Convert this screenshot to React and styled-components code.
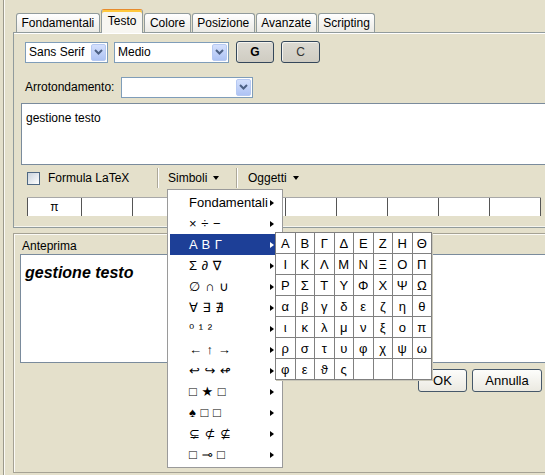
import React from "react";
import styled, { createGlobalStyle } from "styled-components";

const GlobalStyle = createGlobalStyle`
  html, body { margin: 0; padding: 0; }
  body { background: #e4e0cb; }
`;

const Root = styled.div`
  position: relative;
  box-sizing: border-box;
  width: 545px;
  height: 475px;
  overflow: hidden;
  padding-left: 3px;
  background: #e4e0cb;
  font-family: "Liberation Sans", "DejaVu Sans", Arial, sans-serif;
  font-size: 12px;
  color: #000;
`;

const Frame = styled.div`
  height: 100%;
  border-left: 1px solid #9c9a8c;
  box-shadow: inset 1px 0 0 #fbfaf5;
  padding-left: 9px;
`;

const Content = styled.div`
  width: 560px;
`;

const TabStrip = styled.div`
  display: flex;
  align-items: flex-end;
  gap: 1px;
  height: 32px;
  padding-left: 3px;
`;

const Tab = styled.div`
  position: relative;
  z-index: ${(p) => (p.$active ? 2 : 1)};
  box-sizing: border-box;
  display: flex;
  align-items: center;
  height: ${(p) => (p.$active ? 24 : 19)}px;
  margin-bottom: ${(p) => (p.$active ? -1 : 0)}px;
  padding: 0 ${(p) => (p.$active ? 6 : 4.5)}px;
  padding-bottom: ${(p) => (p.$active ? 1 : 0)}px;
  border: 1px solid #919b9c;
  border-top: 1px solid ${(p) => (p.$active ? "#e68b2c" : "#919b9c")};
  border-bottom: none;
  border-radius: 3px 3px 0 0;
  box-shadow: ${(p) => (p.$active ? "inset 0 2px 0 #ffc83c" : "none")};
  background: ${(p) => (p.$active ? "#f7f6f1" : "linear-gradient(#ffffff, #ebeae4)")};
  font-size: 12px;
`;

const TabPanel = styled.div`
  box-sizing: border-box;
  display: flex;
  flex-direction: column;
  height: 196px;
  padding: 8px 0 0 7px;
  border: 1px solid #919b9c;
  box-shadow: inset 0 1px 0 #fff, inset 0 -1px 0 #f6f5ee;
`;

const Row = styled.div`
  display: flex;
  align-items: center;
  gap: ${(p) => p.$gap || 6}px;
  height: 22px;
  margin-top: ${(p) => p.$top || 0}px;
  padding-left: 4px;
`;

const Combo = styled.div`
  box-sizing: border-box;
  display: flex;
  align-items: center;
  justify-content: space-between;
  width: ${(p) => p.$w}px;
  height: 21px;
  padding: 0 1px 0 3px;
  border: 1px solid #7f9db9;
  background: #fff;
  font-size: 12px;
`;

const ComboArrow = styled.span`
  box-sizing: border-box;
  display: flex;
  align-items: center;
  justify-content: center;
  width: 15px;
  height: 17px;
  border: 1px solid #b6c9f2;
  border-radius: 2px;
  background: linear-gradient(#d4e0fd, #aec3f4);
`;

const ToggleButton = styled.div`
  box-sizing: border-box;
  display: flex;
  align-items: center;
  justify-content: center;
  width: ${(p) => p.$w}px;
  height: 22px;
  margin-left: 1px;
  border: 1px solid #34475a;
  border-radius: 3px;
  background: linear-gradient(#dcdad2, #cfccc2);
  box-shadow: inset 1px 1px 0 #f4f3ee;
  font-size: 12px;
  font-weight: ${(p) => (p.$bold ? 700 : 400)};
  color: ${(p) => (p.$bold ? "#000" : "#333")};
`;

const TextArea = styled.div`
  box-sizing: border-box;
  height: 62px;
  margin-top: 5px;
  padding: 7px 4px;
  border: 1px solid #7a8b9c;
  background: #fff;
  line-height: 14px;
`;

const CheckRow = styled.div`
  display: flex;
  align-items: center;
  height: 20px;
  margin-top: 3px;
`;

const CheckGroup = styled.label`
  box-sizing: border-box;
  display: flex;
  align-items: center;
  gap: 8px;
  width: 136px;
  padding-left: 6px;
`;

const CheckBox = styled.span`
  box-sizing: border-box;
  width: 13px;
  height: 13px;
  border: 1px solid #4f6882;
  background: linear-gradient(135deg, #c9d2dc, #ffffff);
`;

const Separator = styled.span`
  width: 0;
  height: 20px;
  border-left: 1px solid #aca899;
  border-right: 1px solid #fff;
`;

const DropButton = styled.div`
  box-sizing: border-box;
  display: flex;
  align-items: center;
  gap: 6px;
  width: ${(p) => p.$w}px;
  padding-left: ${(p) => p.$pad}px;
`;

const DownTriangle = styled.span`
  width: 0;
  height: 0;
  border-left: 3.5px solid transparent;
  border-right: 3.5px solid transparent;
  border-top: 4px solid #000;
`;

const SymbolBar = styled.div`
  display: flex;
  width: 514px;
  height: 19px;
  margin: 9px 0 0 6px;
  border-top: 1px solid #a8a8a8;
  background: #fff;
  box-sizing: border-box;
`;

const SymbolCell = styled.div`
  box-sizing: border-box;
  display: flex;
  align-items: center;
  justify-content: center;
  flex: 0 0 ${(p) => p.$w}px;
  border-right: 1px solid #555;
  border-left: ${(p) => (p.$first ? "1px solid #555" : "none")};
  font-size: 12px;
`;

const PreviewGroup = styled.div`
  box-sizing: border-box;
  height: 240px;
  margin-top: 5px;
  padding: 6px 0 0 6px;
  border-top: 1px solid #a5a294;
  border-left: 1px solid #a5a294;
  border-bottom: 1px solid #a5a294;
  box-shadow: inset 1px 1px 0 #fbfaf5;
`;

const GroupTitle = styled.div`
  height: 14px;
  padding-left: 2px;
  line-height: 12px;
`;

const PreviewBox = styled.div`
  box-sizing: border-box;
  height: 109px;
  padding: 8px 4px;
  border: 1px solid #7a8b9c;
  background: #fff;
  font-size: 16px;
  font-weight: 700;
  font-style: italic;
  line-height: 19px;
`;

const ButtonBar = styled.div`
  display: flex;
  justify-content: flex-end;
  gap: 5px;
  margin-top: 6px;
  padding-right: 31px;
`;

const DialogButton = styled.div`
  box-sizing: border-box;
  display: flex;
  align-items: center;
  justify-content: center;
  width: ${(p) => p.$w}px;
  height: 23px;
  border: 1px solid #46586a;
  border-radius: 3px;
  background: linear-gradient(#fdfdfb, #ebe9e1);
  font-size: 13px;
`;

const Menu = styled.div`
  position: absolute;
  left: 167px;
  top: 189px;
  z-index: 5;
  box-sizing: border-box;
  width: 116px;
  height: 279px;
  padding: 2px;
  border: 1px solid #9a9a9a;
  background: #fff;
`;

const MenuItem = styled.div`
  display: flex;
  align-items: center;
  justify-content: space-between;
  height: 21px;
  padding: 0 6px 0 19px;
  background: ${(p) => (p.$active ? "#1d3f97" : "transparent")};
  color: ${(p) => (p.$active ? "#fff" : "#000")};
  font-size: 13px;
  letter-spacing: ${(p) => (p.$symbols ? 0.5 : 0)}px;
`;

const RightTriangle = styled.span`
  width: 0;
  height: 0;
  border-top: 3.5px solid transparent;
  border-bottom: 3.5px solid transparent;
  border-left: 4px solid ${(p) => (p.$active ? "#fff" : "#000")};
`;

const SubMenu = styled.div`
  position: absolute;
  left: 275px;
  top: 232px;
  z-index: 6;
  display: grid;
  grid-template-columns: repeat(8, 19.5px);
  grid-auto-rows: 21px;
  border-top: 1px solid #808080;
  border-left: 1px solid #808080;
  background: #fff;
  box-shadow: 1px 1px 0 #c8c6b8;
`;

const Letter = styled.div`
  display: flex;
  align-items: center;
  justify-content: center;
  border-right: 1px solid #808080;
  border-bottom: 1px solid #808080;
  font-size: 13px;
`;

const Chevron = () => (
  <svg width="9" height="6" viewBox="0 0 9 6">
    <path d="M1 1 L4.5 4.5 L8 1" fill="none" stroke="#4d6185" strokeWidth="2" />
  </svg>
);

const tabs = ["Fondamentali", "Testo", "Colore", "Posizione", "Avanzate", "Scripting"];

const menuItems = [
  "Fondamentali",
  "× ÷ −",
  "Α Β Γ",
  "Σ ∂ ∇",
  "∅ ∩ ∪",
  "∀ ∃ ∄",
  "⁰ ¹ ²",
  "← ↑ →",
  "↩ ↪ ↫",
  "□ ★ □",
  "♠ □ □",
  "⊊ ⊄ ⊈",
  "□ ⊸ □",
];

const greek = [
  "ΑΒΓΔΕΖΗΘ",
  "ΙΚΛΜΝΞΟΠ",
  "ΡΣΤΥΦΧΨΩ",
  "αβγδεζηθ",
  "ικλμνξοπ",
  "ρστυφχψω",
  "φεϑς    ",
];

export default function App() {
  return (
    <Root>
      <GlobalStyle />
      <Frame>
        <Content>
          <TabStrip>
            {tabs.map((t) => (
              <Tab key={t} $active={t === "Testo"}>
                {t}
              </Tab>
            ))}
          </TabStrip>
          <TabPanel>
            <Row>
              <Combo $w={83}>
                Sans Serif
                <ComboArrow>
                  <Chevron />
                </ComboArrow>
              </Combo>
              <Combo $w={115}>
                Medio
                <ComboArrow>
                  <Chevron />
                </ComboArrow>
              </Combo>
              <ToggleButton $w={38} $bold>
                G
              </ToggleButton>
              <ToggleButton $w={39}>C</ToggleButton>
            </Row>
            <Row $top={13} $gap={7}>
              <span>Arrotondamento:</span>
              <Combo $w={132}>
                <span />
                <ComboArrow>
                  <Chevron />
                </ComboArrow>
              </Combo>
            </Row>
            <TextArea>gestione testo</TextArea>
            <CheckRow>
              <CheckGroup>
                <CheckBox />
                Formula LaTeX
              </CheckGroup>
              <Separator />
              <DropButton $w={77} $pad={9}>
                Simboli <DownTriangle />
              </DropButton>
              <Separator />
              <DropButton $w={80} $pad={10}>
                Oggetti <DownTriangle />
              </DropButton>
            </CheckRow>
            <SymbolBar>
              {Array.from({ length: 10 }).map((_, i) => (
                <SymbolCell key={i} $w={i === 0 ? 55 : 51} $first={i === 0}>
                  {i === 0 ? "π" : ""}
                </SymbolCell>
              ))}
            </SymbolBar>
          </TabPanel>
          <PreviewGroup>
            <GroupTitle>Anteprima</GroupTitle>
            <PreviewBox>gestione testo</PreviewBox>
            <ButtonBar>
              <DialogButton $w={49}>OK</DialogButton>
              <DialogButton $w={70}>Annulla</DialogButton>
            </ButtonBar>
          </PreviewGroup>
        </Content>
      </Frame>

      <Menu>
        {menuItems.map((m, i) => (
          <MenuItem key={m} $active={i === 2} $symbols={i > 0}>
            <span>{m}</span>
            <RightTriangle $active={i === 2} />
          </MenuItem>
        ))}
      </Menu>

      <SubMenu>
        {greek.map((row) =>
          row.split("").map((ch, j) => <Letter key={row + j}>{ch.trim()}</Letter>)
        )}
      </SubMenu>
    </Root>
  );
}
